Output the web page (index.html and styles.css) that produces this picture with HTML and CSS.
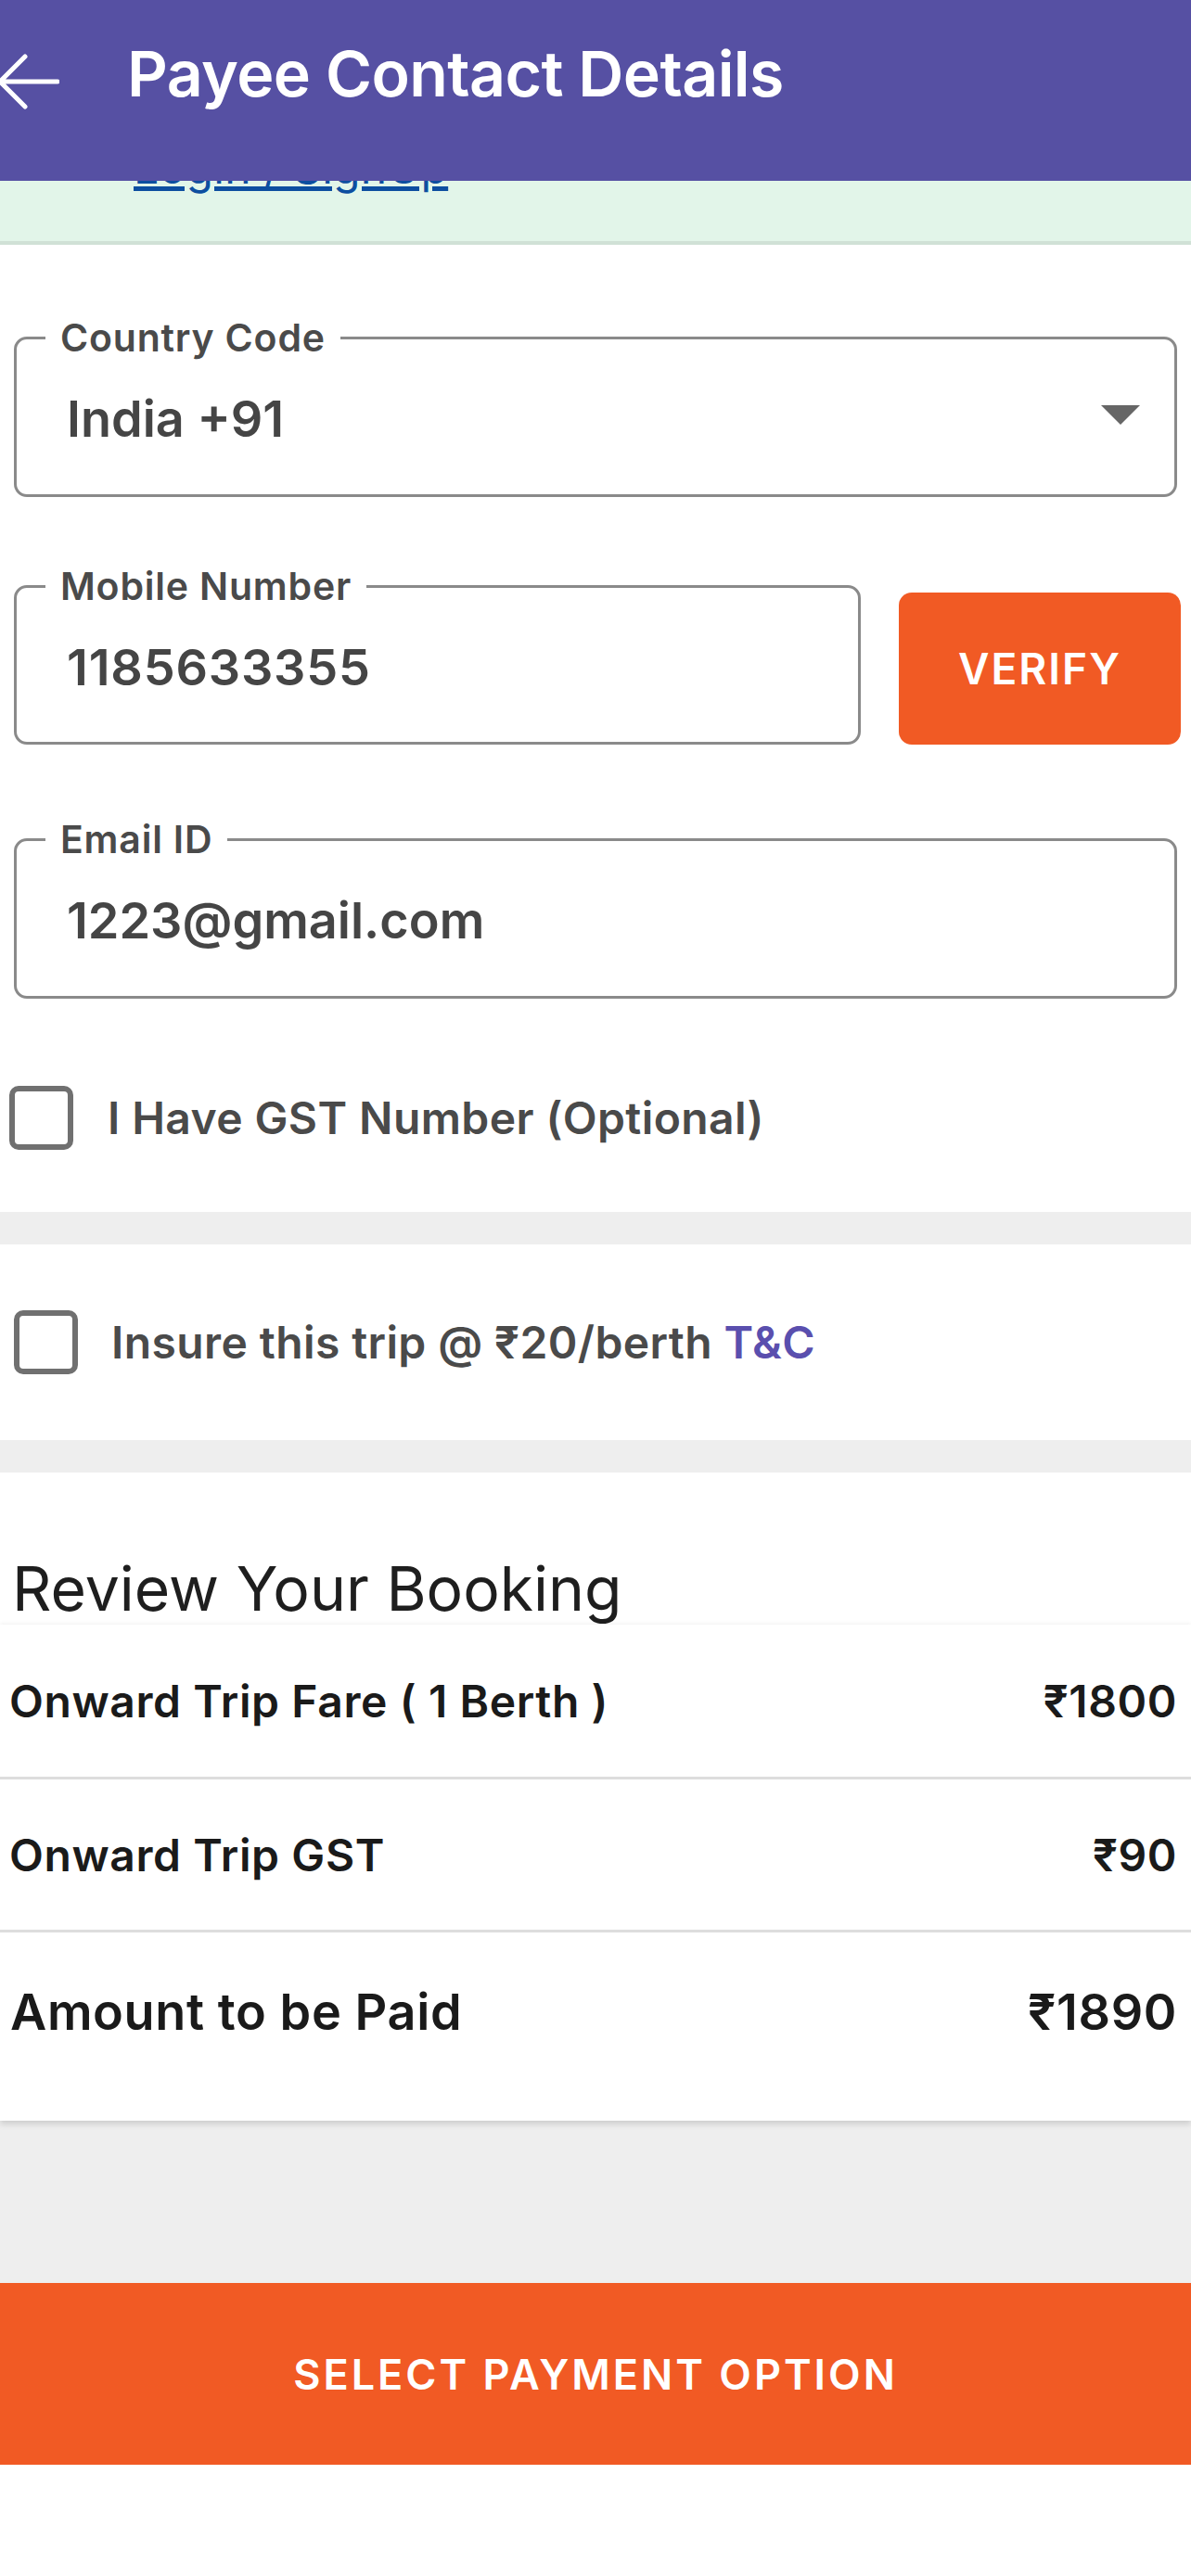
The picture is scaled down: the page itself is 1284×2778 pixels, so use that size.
FILE: index.html
```html
<!DOCTYPE html>
<html lang="en">
<head>
    <meta charset="UTF-8">
    <meta name="viewport" content="width=device-width, initial-scale=1.0">
    <title>Payee Contact Details</title>
    <link rel="stylesheet" href="styles.css">
</head>
<body>

    <!-- Top app bar -->
    <header class="app-bar">
        <svg class="back-icon" viewBox="0 0 70 60" width="70" height="60">
            <path d="M6 30 H68 M33 3 L6 30 L33 57" fill="none" stroke="#ffffff" stroke-width="5" stroke-linecap="round" stroke-linejoin="round"/>
        </svg>
        <h1 class="app-title">Payee Contact Details</h1>
    </header>

    <!-- Login banner (scrolled under the bar) -->
    <div class="login-banner">
        <a href="#" class="login-link">Login / SignUp</a>
    </div>

    <!-- Contact form -->
    <section class="contact-form">
        <fieldset class="field">
            <legend>Country Code</legend>
            <div class="field-value">
                <span>India +91</span>
                <span class="caret"></span>
            </div>
        </fieldset>

        <div class="mobile-row">
            <fieldset class="field field-mobile">
                <legend>Mobile Number</legend>
                <div class="field-value"><span>1185633355</span></div>
            </fieldset>
            <button class="verify-btn">VERIFY</button>
        </div>

        <fieldset class="field field-email">
            <legend>Email ID</legend>
            <div class="field-value"><span>1223@gmail.com</span></div>
        </fieldset>

        <label class="check-row gst-row">
            <span class="check-box"></span>
            <span>I Have GST Number (Optional)</span>
        </label>
    </section>

    <div class="band"></div>

    <section class="insure-section">
        <label class="check-row">
            <span class="check-box"></span>
            <span>Insure this trip @ ₹20/berth <a href="#" class="tc-link">T&amp;C</a></span>
        </label>
    </section>

    <div class="band"></div>

    <!-- Booking review -->
    <section class="review">
        <h2 class="review-title">Review Your Booking</h2>
        <div class="fare-card">
            <div class="fare-row">
                <span>Onward Trip Fare ( 1 Berth )</span>
                <span>₹1800</span>
            </div>
            <div class="fare-row">
                <span>Onward Trip GST</span>
                <span>₹90</span>
            </div>
            <div class="fare-row fare-total">
                <span>Amount to be Paid</span>
                <span>₹1890</span>
            </div>
        </div>
    </section>

    <div class="gray-space"></div>

    <button class="pay-btn">SELECT PAYMENT OPTION</button>

    <div class="bottom-space"></div>

</body>
</html>
```

FILE: styles.css
```css
/* General page styling */
body {
    margin: 0;
    font-family: Inter, "Noto Sans", sans-serif;
    background: #ffffff;
    color: #444444;
    width: 1284px;
}

/* App bar */
.app-bar {
    position: relative;
    z-index: 2;
    height: 195px;
    box-sizing: border-box;
    background: #5650a3;
    display: flex;
    align-items: flex-start;
    padding-top: 38px;
}

.back-icon {
    margin-top: 20px;
    margin-left: -6px;
    flex-shrink: 0;
}

.app-title {
    margin: 0 0 0 73px;
    color: #ffffff;
    font-size: 68px;
    line-height: 82px;
    font-weight: 600;
    letter-spacing: -0.6px;
}

/* Login banner */
.login-banner {
    margin-top: -60px;
    padding: 22px 0 55px 144px;
    background: #e2f5e9;
    border-bottom: 4px solid #d0e1d6;
}

.login-link {
    display: block;
    font-size: 48px;
    line-height: 48px;
    letter-spacing: 0.3px;
    color: #0d4ea0;
    text-decoration: underline;
    text-decoration-thickness: 5px;
}

/* Form */
.contact-form {
    padding: 78px 15px 67px 15px;
}

.field {
    margin: 0;
    padding: 33px 37px 48px 31px;
    border: 3px solid #8a8a8a;
    border-radius: 14px;
    min-width: 0;
}

.field legend {
    padding: 0 16px;
    font-size: 41px;
    line-height: 44px;
    font-weight: 600;
    letter-spacing: 0.8px;
    color: #4a4a4a;
}

.field-value {
    display: flex;
    justify-content: space-between;
    align-items: center;
    padding-left: 23px;
    font-size: 54px;
    line-height: 66px;
    font-weight: 600;
    color: #454545;
}

.caret {
    width: 0;
    height: 0;
    border-left: 21px solid transparent;
    border-right: 21px solid transparent;
    border-top: 21px solid #666666;
    margin-bottom: 10px;
}

.mobile-row {
    display: flex;
    align-items: flex-end;
    margin-top: 74px;
    margin-right: -4px;
}

.field-mobile {
    width: 913px;
    box-sizing: border-box;
    padding-bottom: 47px;
}

.field-mobile .field-value {
    letter-spacing: 0.8px;
}

.verify-btn {
    margin-left: 41px;
    width: 304px;
    height: 164px;
    border: none;
    border-radius: 14px;
    background: #f15a24;
    color: #ffffff;
    font-family: inherit;
    font-size: 46px;
    font-weight: 600;
    letter-spacing: 2px;
}

.field-email {
    margin-top: 80px;
}

/* Checkbox rows */
.check-row {
    display: flex;
    align-items: center;
    gap: 37px;
    font-size: 48px;
    font-weight: 600;
    letter-spacing: 0.4px;
    color: #4a4a4a;
}

.gst-row {
    margin-top: 94px;
    margin-left: -5px;
}

.check-box {
    width: 69px;
    height: 69px;
    box-sizing: border-box;
    border: 6px solid #707070;
    border-radius: 10px;
    flex-shrink: 0;
}

.tc-link {
    color: #5a4fae;
    text-decoration: none;
}

.band {
    height: 35px;
    background: #eeeeee;
}

.insure-section {
    padding: 71px 15px;
}

.insure-section .check-row {
    gap: 36px;
}

/* Review */
.review {
    padding-top: 87px;
}

.review-title {
    margin: 0 0 0 13px;
    font-size: 66px;
    line-height: 77px;
    font-weight: 400;
    color: #1e1e1e;
}

.fare-card {
    background: #ffffff;
    padding-bottom: 33px;
    box-shadow: 0 -2px 4px rgba(0, 0, 0, 0.04), 0 4px 6px rgba(0, 0, 0, 0.13);
    position: relative;
}

.fare-row {
    display: flex;
    justify-content: space-between;
    align-items: center;
    height: 164px;
    padding: 0 15px 0 10px;
    border-bottom: 3px solid #dddddd;
    font-size: 48px;
    font-weight: 600;
    letter-spacing: 0.6px;
    color: #1a1a1a;
}

.fare-row:nth-child(2) {
    height: 162px;
}

.fare-total {
    height: 170px;
    border-bottom: none;
    padding-left: 11px;
    font-size: 54px;
    letter-spacing: 0.6px;
}

.gray-space {
    height: 175px;
    background: #eeeeee;
}

.pay-btn {
    display: block;
    width: 100%;
    height: 196px;
    border: none;
    background: #f15a24;
    color: #ffffff;
    font-family: inherit;
    font-size: 45px;
    font-weight: 600;
    letter-spacing: 3px;
}

.bottom-space {
    height: 120px;
}
```
